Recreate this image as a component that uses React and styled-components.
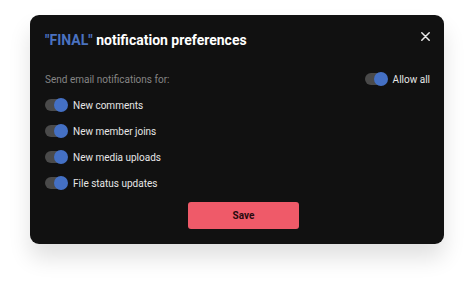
import styled, { createGlobalStyle } from "styled-components";

const GlobalStyle = createGlobalStyle`
  body {
    margin: 0;
    background: #ffffff;
    font-family: Roboto, "Liberation Sans", sans-serif;
  }
`;

const items = ["New comments", "New member joins", "New media uploads", "File status updates"];

function Toggle() {
  return (
    <Track>
      <Thumb />
    </Track>
  );
}

export default function App() {
  return (
    <>
      <GlobalStyle />
      <Page>
        <Card>
          <Header>
            <Title>
              <Accent>"FINAL"</Accent> notification preferences
            </Title>
            <Close aria-label="Close">
              <svg width="9" height="9" viewBox="0 0 9 9">
                <path d="M0.8 0.8L8.2 8.2M8.2 0.8L0.8 8.2" stroke="#e8e8e8" strokeWidth="1.5" strokeLinecap="round" />
              </svg>
            </Close>
          </Header>
          <SubRow>
            <Muted>Send email notifications for:</Muted>
            <Option>
              <Toggle />
              <Label>Allow all</Label>
            </Option>
          </SubRow>
          <List>
            {items.map((item) => (
              <Option key={item}>
                <Toggle />
                <Label>{item}</Label>
              </Option>
            ))}
          </List>
          <Footer>
            <SaveButton>Save</SaveButton>
          </Footer>
        </Card>
      </Page>
    </>
  );
}

const Page = styled.div`
  padding: 15px 30px 0 30px;
  width: 474px;
  height: 290px;
  box-sizing: border-box;
`;

const Card = styled.div`
  width: 414px;
  height: 229px;
  box-sizing: border-box;
  background: #111111;
  border-radius: 9px;
  padding: 16px 14px 15px 15px;
  display: flex;
  flex-direction: column;
  box-shadow: 0 14px 22px rgba(0, 0, 0, 0.12);
`;

const Header = styled.div`
  display: flex;
  align-items: center;
  justify-content: space-between;
  height: 18px;
`;

const Title = styled.h2`
  margin: 0;
  font-size: 14px;
  font-weight: 700;
  color: #ffffff;
  line-height: 18px;
`;

const Accent = styled.span`
  color: #4a72c0;
`;

const Close = styled.button`
  background: none;
  border: none;
  padding: 0;
  margin-right: 0;
  margin-top: -8px;
  display: flex;
`;

const SubRow = styled.div`
  margin-top: 22px;
  display: flex;
  justify-content: space-between;
  align-items: center;
  height: 16px;
`;

const Muted = styled.span`
  font-size: 10px;
  color: #858585;
`;

const List = styled.div`
  margin-top: 10px;
  display: flex;
  flex-direction: column;
  gap: 10px;
`;

const Option = styled.div`
  display: flex;
  align-items: center;
  gap: 6px;
  height: 16px;
`;

const Label = styled.span`
  font-size: 10px;
  color: #e6e6e6;
`;

const Track = styled.span`
  position: relative;
  width: 22px;
  height: 12px;
  border-radius: 6px;
  background: #4a4a4a;
`;

const Thumb = styled.span`
  position: absolute;
  right: -1px;
  top: -1px;
  width: 14px;
  height: 14px;
  border-radius: 50%;
  background: #4470c4;
`;

const Footer = styled.div`
  margin-top: 11px;
  padding-left: 143px;
`;

const SaveButton = styled.button`
  width: 111px;
  height: 27px;
  border: none;
  border-radius: 3px;
  background: #ef5a69;
  color: #2a0a0e;
  font-family: Roboto, "Liberation Sans", sans-serif;
  font-size: 10px;
  font-weight: 700;
`;
